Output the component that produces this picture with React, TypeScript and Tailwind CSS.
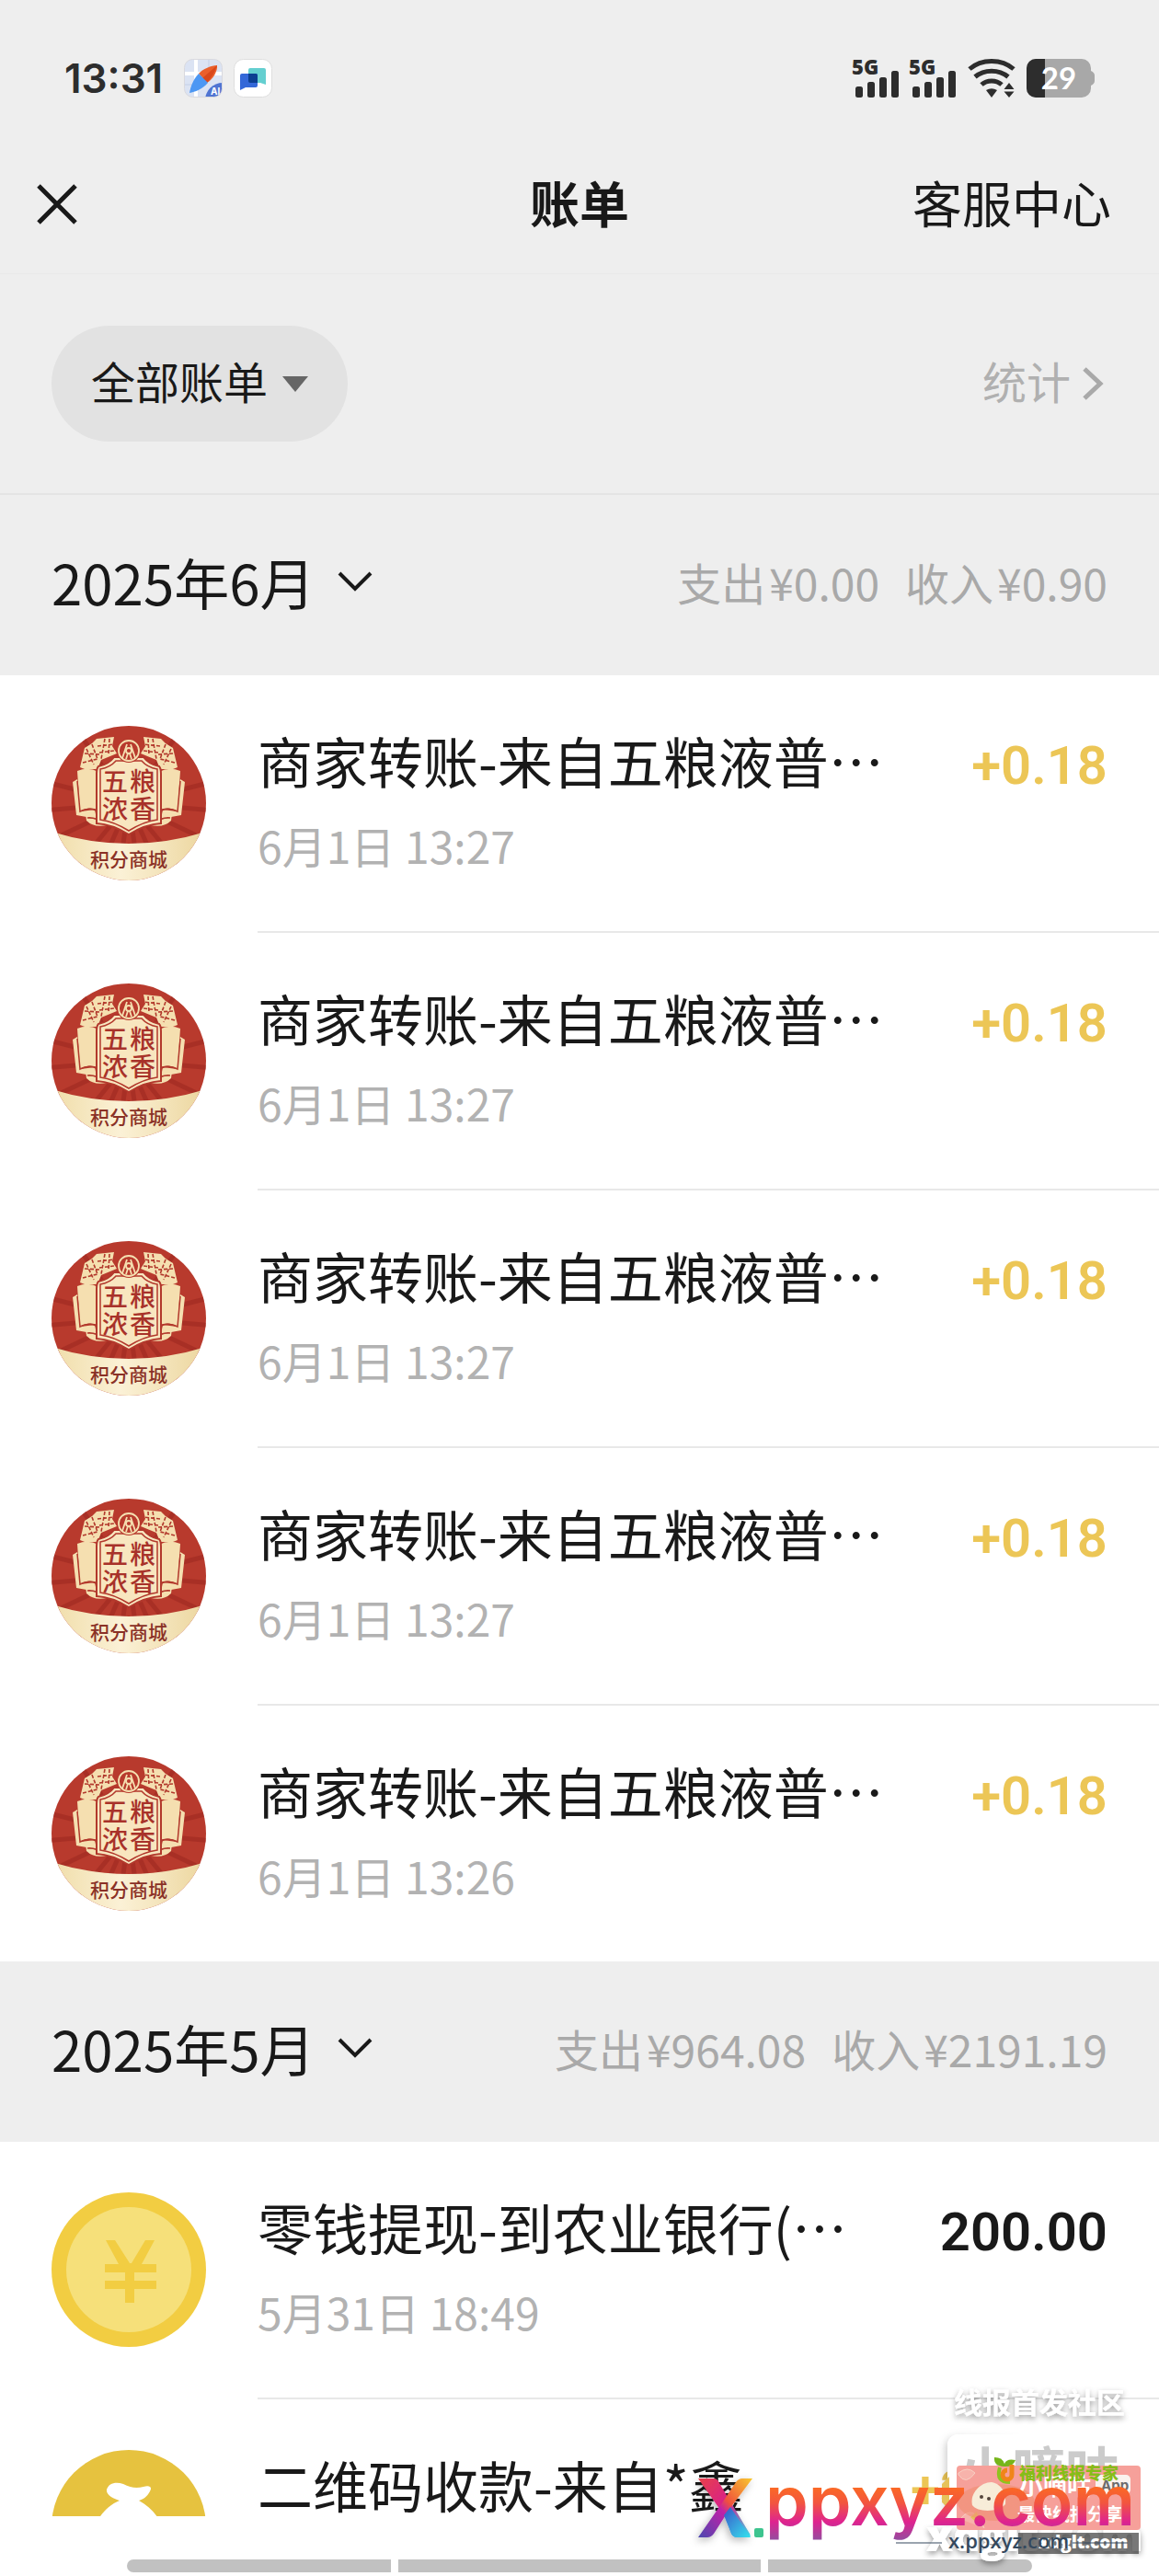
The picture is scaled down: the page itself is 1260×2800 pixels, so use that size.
import { clsx } from "clsx";

type Kind = "shop" | "coin" | "bag";

interface Bill {
  kind: Kind;
  title: string;
  time: string;
  amount: string;
}

interface Month {
  label: string;
  out: string;
  income: string;
  bills: Bill[];
}

const shopBill = (time: string): Bill => ({
  kind: "shop",
  title: "商家转账-来自五粮液普…",
  time,
  amount: "+0.18",
});

const months: Month[] = [
  {
    label: "2025年6月",
    out: "¥0.00",
    income: "¥0.90",
    bills: [
      shopBill("6月1日 13:27"),
      shopBill("6月1日 13:27"),
      shopBill("6月1日 13:27"),
      shopBill("6月1日 13:27"),
      shopBill("6月1日 13:26"),
    ],
  },
  {
    label: "2025年5月",
    out: "¥964.08",
    income: "¥2191.19",
    bills: [
      { kind: "coin", title: "零钱提现-到农业银行(…", time: "5月31日 18:49", amount: "200.00" },
      { kind: "bag", title: "二维码收款-来自*鑫", time: "5月31日 12:20", amount: "+300.00" },
    ],
  },
];

const MapAppIcon = () => (
  <svg className="size-[42px]" viewBox="0 0 42 42" aria-hidden="true">
    <defs>
      <clipPath id="map-clip">
        <rect x="0.5" y="0.5" width="41" height="41" rx="9" />
      </clipPath>
    </defs>
    <g clipPath="url(#map-clip)">
      <rect width="42" height="42" fill="#dbe3f3" />
      <path d="M13 0V42M0 16H42" stroke="#fff" strokeWidth="4" />
      <path d="M27 0V14M0 28H14" stroke="#c3cfe6" strokeWidth="1" />
      <circle cx="42" cy="45" r="19" fill="#4f74d2" />
      <path d="M36 7C37 13 31 23 25 26L16 16C20 11 30 7 36 7Z" fill="#ea5f2c" />
      <path d="M36 7C34 14 30 20 25 26L20 21Z" fill="#d9481c" />
      <path d="M16 16L26 26C20 33 12 36 6 37C7 31 10 22 16 16Z" fill="#4c97f3" />
      <text x="29" y="39" fontSize="10" fontWeight="700" fill="#fff" fontFamily="Inter, sans-serif">AI</text>
    </g>
    <rect x="0.5" y="0.5" width="41" height="41" rx="9" fill="none" stroke="#d9d9de" />
  </svg>
);

const ChatAppIcon = () => (
  <svg className="size-[42px]" viewBox="0 0 42 42" aria-hidden="true">
    <rect x="0.5" y="0.5" width="41" height="41" rx="10" fill="#fff" stroke="#dedede" />
    <path d="M18 10H33Q35 10 35 12V28L29 26H18Q16 26 16 24V12Q16 10 18 10Z" fill="#64cfd0" />
    <path d="M9 16H24Q26 16 26 18V29Q26 31 24 31H13L7 34V18Q7 16 9 16Z" fill="#3468d8" />
    <path d="M16 16H24Q26 16 26 18V26H18Q16 26 16 24Z" fill="#0c3f91" />
  </svg>
);

const Signal = () => (
  <svg className="h-11 w-[50px] overflow-visible" viewBox="0 0 50 44" fill="#2d2d2d" aria-hidden="true">
    <text x="-2" y="18" fontSize="22" fontWeight="800" fontFamily="'Open Sans', sans-serif">5G</text>
    <rect x="2" y="31" width="8" height="12" rx="2.5" />
    <rect x="15" y="26" width="8" height="17" rx="2.5" />
    <rect x="28" y="21" width="8" height="22" rx="2.5" />
    <rect x="41" y="14" width="8" height="29" rx="2.5" />
  </svg>
);

const Wifi = () => (
  <svg className="h-11 w-[52px]" viewBox="0 0 52 44" fill="none" aria-hidden="true">
    <g stroke="#2d2d2d" strokeWidth="5">
      <path d="M2 12C15 .5 37 .5 50 12" />
      <path d="M8 20.500C18 12 34 12 44 20.500" />
      <path d="M15 29C21 23.500 31 23.500 37 29" />
    </g>
    <g fill="#2d2d2d">
      <path d="M20 35Q26 31.500 32 35L26 43Z" />
      <path d="M45 27L50.500 34H39.500ZM39.500 36.500H50.500L45 43Z" />
    </g>
  </svg>
);

const Battery = () => (
  <svg className="h-[42px] w-[74px]" viewBox="0 0 74 42" aria-label="29%">
    <defs>
      <clipPath id="battery-clip">
        <rect width="70" height="42" rx="10" />
      </clipPath>
    </defs>
    <path d="M70 13Q74 15 74 18V24Q74 27 70 29Z" fill="#a8a8a8" />
    <g clipPath="url(#battery-clip)">
      <rect width="70" height="42" fill="#a8a8a8" />
      <rect width="20" height="42" fill="#2d2d2d" />
    </g>
    <text x="35" y="33" fontSize="33" fontWeight="700" fill="#fff" textAnchor="middle" fontFamily="Lato, sans-serif">
      29
    </text>
  </svg>
);

const StatusBar = () => (
  <div className="flex h-[150px] items-center justify-between px-[70px] pt-5">
    <div className="flex items-center">
      <span className="w-[130px] font-[Inter] text-[44px] leading-none font-semibold text-[#2d2d2d]">13:31</span>
      <div className="flex gap-3">
        <MapAppIcon />
        <ChatAppIcon />
      </div>
    </div>
    <div className="flex items-center gap-3">
      <Signal />
      <Signal />
      <Wifi />
      <Battery />
    </div>
  </div>
);

// Wheat ear and ribbon on the left half of the crest; mirrored for the right
const CrestSide = () => (
  <g>
    <path d="M31 45L36 24L44 19L49 14L68 12L66 22L71 30L54 37L50 47L36 47Z" fill="#f5dfb0" />
    <path
      d="M34 40L50 36M36 30L52 31M44 20L50 36M58 14L54 36M38 25L46 42M50 22L68 20M52 29L68 27M63 14L62 32"
      stroke="#b2382c"
      strokeWidth="1.6"
      strokeDasharray="4 2"
    />
    <path d="M28 49Q40 44 51 50V91Q40 87 31 93Z" fill="#f5dfb0" />
    <path d="M23 61L28 58L32 93L47 91L49 101L27 97Z" fill="#f5dfb0" />
    <path d="M37 95Q51 93 60 108Q46 111 38 103Z" fill="#f5dfb0" />
    <path d="M28 60L31 93Q40 88 49 92M39 100Q48 99 57 106" stroke="#b2382c" strokeWidth="1.5" fill="none" />
  </g>
);

const ShopAvatar = () => (
  <svg className="size-[168px]" viewBox="0 0 168 168" aria-hidden="true">
    <defs>
      <clipPath id="shop-clip">
        <circle cx="84" cy="84" r="84" />
      </clipPath>
      <linearGradient id="shop-foot" x1="0" x2="1" y1="0" y2="0">
        <stop offset="0" stopColor="#f0dda9" />
        <stop offset=".45" stopColor="#fbf1d6" />
        <stop offset="1" stopColor="#ecd69e" />
      </linearGradient>
    </defs>
    <g clipPath="url(#shop-clip)">
      <rect width="168" height="168" fill="#b83a2d" />
      <g stroke="#a12c23" strokeWidth="5" opacity=".7">
        <path d="M84 84L-10 60M84 84L-10 92M84 84L0 124M84 84L30 150M84 84L55 150M84 84L75 150M84 84L93 150M84 84L113 150M84 84L138 150M84 84L168 124M84 84L178 92M84 84L178 60M84 84L20 -6M84 84L148 -6" />
      </g>
      <g>
        <CrestSide />
        <g transform="translate(168 0) scale(-1 1)">
          <CrestSide />
        </g>
      </g>
      <path
        d="M51 44Q62 42 68 34H100Q106 42 117 44Q119 46 119 52V106Q102 107 84 118Q66 107 49 106V52Q49 46 51 44Z"
        fill="#f8e6bf"
        stroke="#b2382c"
        strokeWidth="2"
      />
      <path
        d="M53 47Q64 45 70 38H98Q104 45 115 47V102Q100 104 84 114Q68 104 53 102Z"
        fill="none"
        stroke="#b2382c"
        strokeWidth="1.5"
      />
      <circle cx="84" cy="27" r="13" fill="#b83a2d" />
      <g fill="none" stroke="#f5dfb0" strokeWidth="1.8">
        <circle cx="84" cy="27" r="11" />
        <path d="M77 35L82 20M91 35L86 20M81 36L83 30M87 36L85 30" />
        <circle cx="84" cy="27" r="3" />
      </g>
      <g
        fill="#a8322a"
        fontSize="28"
        fontWeight="500"
        textAnchor="middle"
        fontFamily="'Noto Sans CJK SC', sans-serif"
      >
        <text x="69" y="71">五</text>
        <text x="99" y="71">粮</text>
        <text x="69" y="101">浓</text>
        <text x="99" y="101">香</text>
      </g>
      <path d="M0 115Q84 141 168 115V168H0Z" fill="url(#shop-foot)" />
      <text
        x="84"
        y="153"
        fill="#8a3126"
        fontSize="21"
        fontWeight="500"
        textAnchor="middle"
        fontFamily="'Noto Sans CJK SC', sans-serif"
      >
        积分商城
      </text>
    </g>
  </svg>
);

const CoinAvatar = () => (
  <svg className="size-[168px]" viewBox="0 0 168 168" aria-hidden="true">
    <circle cx="84" cy="84" r="84" fill="#f2cd42" />
    <circle cx="84" cy="84" r="68" fill="#f6e07a" />
    <path
      d="M59 52H69L85 77H87L102 52H112L98 78H114V87H90V96H114V105H90V120H80V105H58V96H80V87H58V78H73Z"
      fill="#f2cd42"
    />
  </svg>
);

const BagAvatar = () => (
  <svg className="size-[168px]" viewBox="0 0 168 168" aria-hidden="true">
    <circle cx="84" cy="84" r="84" fill="#e6c23f" />
    <path
      d="M60 43C62 36 70 34 78 37C86 41 92 42 100 40C106 38 110 40 107 45C104 51 99 54 95 55C116 66 128 90 126 112C124 128 44 128 42 112C40 90 52 64 74 55C68 53 59 49 60 43Z"
      fill="#fff"
    />
  </svg>
);

const avatars = { shop: ShopAvatar, coin: CoinAvatar, bag: BagAvatar };

const BillRow = ({ bill, last }: { bill: Bill; last: boolean }) => {
  const Avatar = avatars[bill.kind];
  return (
    <li className="flex gap-14 pl-14">
      <div className="shrink-0 pt-[55px]">
        <Avatar />
      </div>
      <div
        className={clsx(
          "flex grow justify-between pt-15 pr-14",
          last ? "h-[278px]" : "h-[280px] border-b-2 border-[#e8e8e8]",
        )}
      >
        <div>
          <p className="text-[60px] leading-16 text-[#191919]">{bill.title}</p>
          <p className="mt-7 text-[48px] leading-16 text-[#b2b2b2]">{bill.time}</p>
        </div>
        <p
          className={clsx(
            "font-[Roboto] text-[58px] leading-[76px] font-semibold",
            bill.amount.startsWith("+") ? "text-[#ecc656]" : "text-[#191919]",
          )}
        >
          {bill.amount}
        </p>
      </div>
    </li>
  );
};

const MonthSection = ({ month }: { month: Month }) => (
  <section>
    <div className="flex h-[196px] items-center justify-between bg-[#eee] px-14 pb-2">
      <button type="button" className="flex items-center gap-6 text-[60px] leading-16 text-[#191919]">
        {month.label}
        <svg className="h-[22px] w-[38px]" viewBox="0 0 38 22" fill="none" aria-hidden="true">
          <path d="M2 2L19 19L36 2" stroke="#191919" strokeWidth="4" />
        </svg>
      </button>
      <p className="flex gap-7 text-[48px] leading-16 text-[#a9a9a9]">
        <span className="flex gap-1">
          支出<span>{month.out}</span>
        </span>
        <span className="flex gap-1">
          收入<span>{month.income}</span>
        </span>
      </p>
    </div>
    <ul className="bg-white">
      {month.bills.map((bill, i) => (
        <BillRow key={i} bill={bill} last={i === month.bills.length - 1} />
      ))}
    </ul>
  </section>
);

// Stacked forum stamps in the lower right corner
const Watermark = () => (
  <svg className="absolute right-0 bottom-0 h-60 w-[520px]" viewBox="0 0 520 240" aria-hidden="true">
    <defs>
      <linearGradient id="wm-text" x1="0" x2="0" y1="143" y2="202" gradientUnits="userSpaceOnUse">
        <stop offset="0" stopColor="#fb6a24" />
        <stop offset=".3" stopColor="#f2553f" />
        <stop offset=".65" stopColor="#de2390" />
        <stop offset="1" stopColor="#8f4fa0" />
      </linearGradient>
      <linearGradient id="wm-a" x1="0" x2="1" y1="0" y2="1">
        <stop offset="0" stopColor="#e8404a" />
        <stop offset=".5" stopColor="#d81f8c" />
        <stop offset="1" stopColor="#2fdcec" />
      </linearGradient>
      <linearGradient id="wm-b" x1="1" x2="0" y1="0" y2="1">
        <stop offset="0" stopColor="#f8c92e" />
        <stop offset=".42" stopColor="#f0523c" />
        <stop offset=".55" stopColor="#c221a8" />
        <stop offset="1" stopColor="#4a48b0" />
      </linearGradient>
      <linearGradient id="wm-c" x1="0" x2="1" y1="0" y2="1">
        <stop offset="0" stopColor="#3a55c8" />
        <stop offset="1" stopColor="#35e3ee" />
      </linearGradient>
      <filter id="wm-shadow" x="-20%" y="-40%" width="140%" height="200%">
        <feDropShadow dx="0" dy="3" stdDeviation="3" floodOpacity=".4" />
      </filter>
      <filter id="wm-soft" x="-20%" y="-20%" width="140%" height="140%">
        <feDropShadow dx="-2" dy="3" stdDeviation="4" floodOpacity=".28" />
      </filter>
      <linearGradient id="wm-fade" x1="0" x2="1" y1="0" y2="0">
        <stop offset="0" stopColor="#fff" />
        <stop offset=".7" stopColor="#000" />
      </linearGradient>
      <mask id="wm-mask">
        <rect x="260" y="70" width="160" height="110" fill="url(#wm-fade)" />
      </mask>
    </defs>

    <text x="297" y="63" fontSize="31" fontWeight="700" fill="#fff" filter="url(#wm-shadow)" fontFamily="'Noto Sans CJK SC', sans-serif">
      线报首发社区
    </text>

    <g mask="url(#wm-mask)">
      <rect x="290" y="86" width="210" height="130" rx="12" fill="#fff" filter="url(#wm-soft)" />
    </g>
    <rect x="290" y="86" width="210" height="108" rx="12" fill="#fff" />
    <text x="302" y="148" fontSize="58" fontWeight="700" fill="#cbcbcb" fontFamily="'Noto Sans CJK SC', sans-serif">
      小嘀咕
    </text>

    <text x="267" y="213" fontSize="46" fontWeight="800" fill="#fff" filter="url(#wm-shadow)" fontFamily="'Open Sans', sans-serif">
      xdglt.com
    </text>

    <rect x="300" y="120" width="200" height="70" rx="4" fill="#f6a09a" />
    <path d="M302 128Q312 120 320 128Q310 142 302 130ZM304 178Q318 160 330 188" fill="#f7b3ab" stroke="#f8d0c4" />
    <path d="M284 140L292 132V166L284 160ZM315 176L322 170L326 186Z" fill="#e6c25a" />
    <ellipse cx="343" cy="160" rx="42" ry="20" fill="#f08e72" opacity=".6" />
    <path d="M317 163C314 150 326 138 338 138C350 140 354 152 353 162C346 171 322 171 317 163Z" fill="#f7ecd8" />
    <circle cx="327" cy="154" r="2" fill="#54453c" />
    <circle cx="335" cy="156" r="2" fill="#54453c" />
    <g fill="#fff" fontWeight="700" fontFamily="'Noto Sans CJK SC', sans-serif">
      <text x="368" y="152" fontSize="26">小嘀咕</text>
      <text x="366" y="180" fontSize="19">最快线报分享</text>
    </g>
    <rect x="451" y="130" width="38" height="21" rx="5" fill="#faf3ee" />
    <text x="457" y="147" fontSize="15" fontWeight="700" fill="#6d6d6d" fontFamily="Inter, sans-serif">App</text>

    <path d="M351 121Q340 120 341 111Q350 111 352 118Q354 112 364 114Q361 122 351 121Z" fill="#76b51b" />
    <path d="M347 122Q342 138 358 138" stroke="#8fc31f" strokeWidth="4" fill="none" />
    <path d="M360 119V130A5 5 0 1 1 355 125" stroke="#f08519" strokeWidth="5" fill="none" />
    <text x="368" y="135" fontSize="18" fontWeight="900" fill="#86bd18" fontFamily="'Noto Sans CJK SC', sans-serif">
      福利线报专家
    </text>

    <rect x="367" y="193" width="131" height="23" fill="#4a4a4a" opacity=".75" />
    <text x="389" y="210" fontSize="19" fontWeight="800" fill="#fff" fontFamily="'Open Sans', sans-serif">
      xdglt.com
    </text>

    <path d="M234 204H284M426 204H486" stroke="#34495e" strokeWidth="1" />
    <text x="291" y="210" fontSize="22" fontWeight="600" fill="#34495e" fontFamily="'Open Sans', sans-serif">
      x.ppxyz.com
    </text>

    <g filter="url(#wm-soft)">
      <path d="M19 134H36Q40 134 42 139L75 194Q77 198 73 198H61Q57 198 55 194L50 178Z" fill="url(#wm-a)" />
      <path d="M78 134L54 166L36 194Q33 198 29 198H19L44 162L60 138Q63 134 67 134Z" fill="url(#wm-b)" />
      <path d="M54 165L76 198H61Q57 198 55 194L47 174Z" fill="url(#wm-c)" />
    </g>
    <rect x="80" y="188" width="10" height="10" rx="2" fill="#3dc48f" />
    <text x="92" y="185" fontSize="75" fontWeight="600" fill="url(#wm-text)" fontFamily="Inter, sans-serif">
      ppxyz.com
    </text>
  </svg>
);

const App = () => {
  return (
    <div className="relative flex h-screen flex-col overflow-hidden bg-white font-['Noto_Sans_CJK_SC',sans-serif]">
      <header className="shrink-0 bg-[#eee]">
        <StatusBar />

        {/* Title bar */}
        <div className="grid h-[148px] grid-cols-3 items-center border-b border-[#e9e9e9] px-10 pb-1">
          <button type="button" aria-label="关闭" className="justify-self-start">
            <svg className="size-11" viewBox="0 0 44 44" fill="none" aria-hidden="true">
              <path d="M2 2L42 42M42 2L2 42" stroke="#191919" strokeWidth="5" />
            </svg>
          </button>
          <h1 className="justify-self-center pb-1 text-[54px] leading-16 font-bold text-[#191919]">账单</h1>
          <a href="#service" className="justify-self-end pr-3 pb-1 text-[54px] leading-16 text-[#191919]">
            客服中心
          </a>
        </div>

        {/* Filter row */}
        <div className="flex h-60 items-center justify-between border-b-2 border-[#e4e4e4] px-14">
          <button
            type="button"
            className="flex h-[126px] items-center gap-4 rounded-full bg-[#e2e2e2] px-[43px] text-[48px] leading-16 text-[#191919]"
          >
            <span className="pb-2">全部账单</span>
            <svg className="h-[17px] w-7" viewBox="0 0 28 17" aria-hidden="true">
              <path d="M0 0H28L14 17Z" fill="#666" />
            </svg>
          </button>
          <a href="#stats" className="flex items-center gap-3 pr-1 text-[48px] leading-16 text-[#b0b0b0]">
            <span className="pb-2">统计</span>
            <svg className="h-9 w-6" viewBox="0 0 24 36" fill="none" aria-hidden="true">
              <path d="M3 2L20 18L3 34" stroke="#a9a9a9" strokeWidth="5" />
            </svg>
          </a>
        </div>
      </header>

      <main className="min-h-0 grow overflow-hidden">
        {months.map((month) => (
          <MonthSection key={month.label} month={month} />
        ))}
      </main>

      {/* Gesture bar */}
      <footer className="flex h-[65px] shrink-0 items-end justify-center gap-2 px-[138px] pb-1">
        <span className="h-[14px] grow rounded-l-full bg-[#c1c1c1]" />
        <span className="h-[14px] w-[394px] bg-[#c1c1c1]" />
        <span className="h-[14px] grow rounded-r-full bg-[#c1c1c1]" />
      </footer>

      <Watermark />
    </div>
  );
};

export default App;
